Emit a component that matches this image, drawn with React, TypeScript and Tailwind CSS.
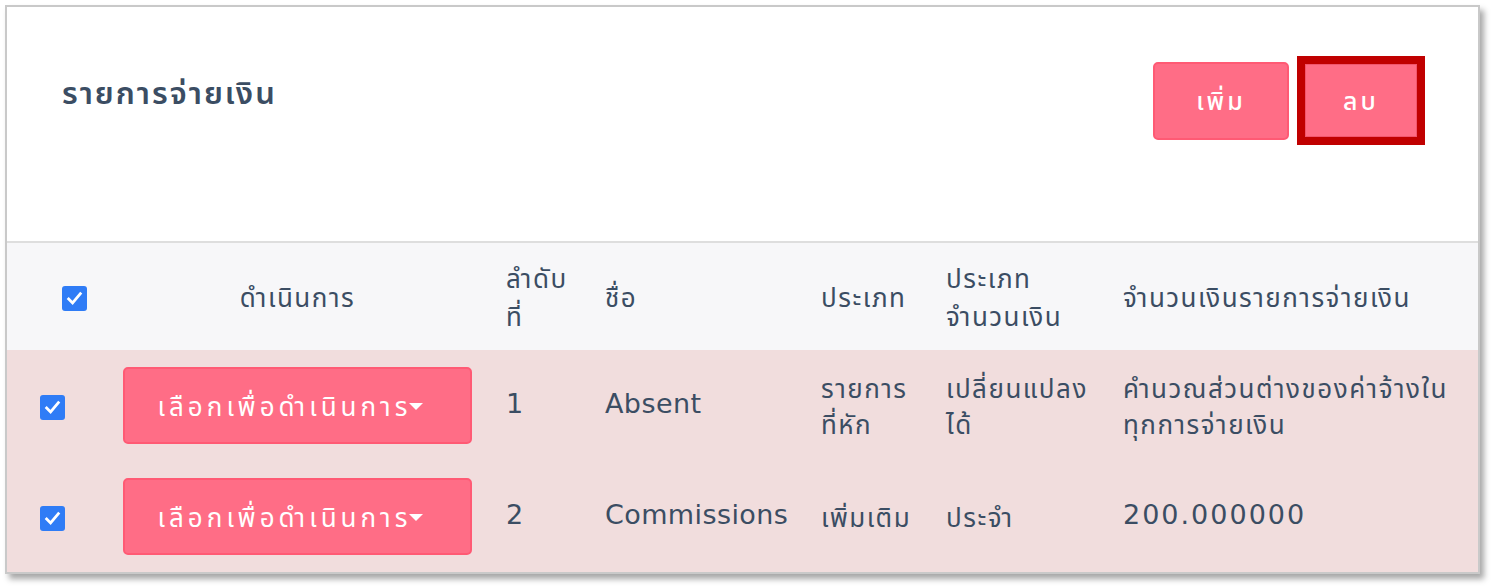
import React from 'react'

const thai = { fontFamily: '"Lato", "Noto Sans", "Noto Sans Thai", "Loma", "Garuda", sans-serif' }
const latin = { fontFamily: '"DejaVu Sans", "Noto Sans Thai", sans-serif' }

function Check({ className = '' }: { className?: string }) {
  return (
    <span className={`inline-flex w-[25px] h-[25px] items-center justify-center rounded-[3px] bg-[#2f7cf6] ${className}`}>
      <svg width="17" height="17" viewBox="0 0 16 16" fill="none">
        <path d="M2.5 8.5 L6.2 12.2 L13.5 3.5" stroke="white" strokeWidth="2.6" strokeLinecap="square" />
      </svg>
    </span>
  )
}

function ActionButton() {
  return (
    <button className="flex w-[349px] h-[77px] items-center justify-center rounded-[5px] border-2 border-[#ff5a74] bg-[#ff6d86] pr-[14px] text-white text-[26px] tracking-[4px]">
      <span>เลือกเพื่อดำเนินการ</span>
      <span className="-ml-[2px] mt-[2px] border-x-[7px] border-t-[7px] border-x-transparent border-t-white" />
    </button>
  )
}

const rows = [
  { no: '1', name: 'Absent', type: ['รายการ', 'ที่หัก'], amountType: ['เปลี่ยนแปลง', 'ได้'], amount: ['คำนวณส่วนต่างของค่าจ้างใน', 'ทุกการจ่ายเงิน'], numeric: false },
  { no: '2', name: 'Commissions', type: ['เพิ่มเติม'], amountType: ['ประจำ'], amount: ['200.000000'], numeric: true },
]

export default function App() {
  return (
    <div className="w-[1492px] h-[586px] bg-white pt-[5px] pl-[5px] text-[#3b4d63]" style={thai}>
      <div className="w-[1475px] h-[569px] border-2 border-[#c9c9c9] bg-white shadow-[4px_5px_6px_rgba(0,0,0,0.35)] overflow-hidden">
        {/* Header */}
        <div className="flex h-[236px] items-start justify-between border-b-2 border-[#dedede] pl-[55px] pr-[53px]">
          <h1 className="mt-[62px] text-[31px] font-semibold tracking-[2px]">รายการจ่ายเงิน</h1>
          <div className="mt-[49px] flex items-center gap-[8px]">
            <button className="w-[136px] h-[78px] rounded-[5px] border-2 border-[#ff5a74] bg-[#ff6d86] text-white text-[25px] font-medium tracking-[3px]">เพิ่ม</button>
            <div className="border-[8px] border-[#c00000]">
              <button className="block w-[112px] h-[73px] border border-[#f2566e] bg-[#ff6d86] text-white text-[25px] font-medium tracking-[3px]">ลบ</button>
            </div>
          </div>
        </div>

        {/* Table */}
        <table className="w-full border-collapse text-[26px] tracking-[1.5px] leading-[36px]">
          <colgroup>
            <col className="w-[99px]" />
            <col className="w-[383px]" />
            <col className="w-[99px]" />
            <col className="w-[216px]" />
            <col className="w-[125px]" />
            <col className="w-[177px]" />
            <col />
          </colgroup>
          <thead>
            <tr className="h-[107px] bg-[#f7f7f9] text-left align-middle">
              <th className="pl-[55px] font-normal"><Check className="mt-[6px]" /></th>
              <th className="text-center font-normal">ดำเนินการ</th>
              <th className="pl-[17px] font-normal leading-[38px]">ลำดับ<br />ที่</th>
              <th className="pl-[17px] font-normal">ชื่อ</th>
              <th className="pl-[17px] font-normal">ประเภท</th>
              <th className="pl-[17px] font-normal leading-[38px]">ประเภท<br />จำนวนเงิน</th>
              <th className="pl-[17px] font-normal">จำนวนเงินรายการจ่ายเงิน</th>
            </tr>
          </thead>
          <tbody className="bg-[#f1dddd]">
            {rows.map((r) => (
              <tr key={r.no} className="h-[111px] align-middle">
                <td className="pl-[33px]"><Check className="mt-[8px]" /></td>
                <td className="pl-[17px]"><ActionButton /></td>
                <td className="pl-[17px] pb-[3px] text-[27px] tracking-[0.5px]" style={latin}>{r.no}</td>
                <td className="pl-[17px] pb-[3px] text-[27px] tracking-[0.4px]" style={latin}>{r.name}</td>
                <td className="pl-[17px]">{r.type.map((t, i) => <div key={i}>{t}</div>)}</td>
                <td className="pl-[17px]">{r.amountType.map((t, i) => <div key={i}>{t}</div>)}</td>
                {r.numeric ? (
                  <td className="pl-[17px] pb-[3px] text-[27px] tracking-[2px]" style={latin}>{r.amount[0]}</td>
                ) : (
                  <td className="pl-[17px]">{r.amount.map((t, i) => <div key={i}>{t}</div>)}</td>
                )}
              </tr>
            ))}
          </tbody>
        </table>
      </div>
    </div>
  )
}
